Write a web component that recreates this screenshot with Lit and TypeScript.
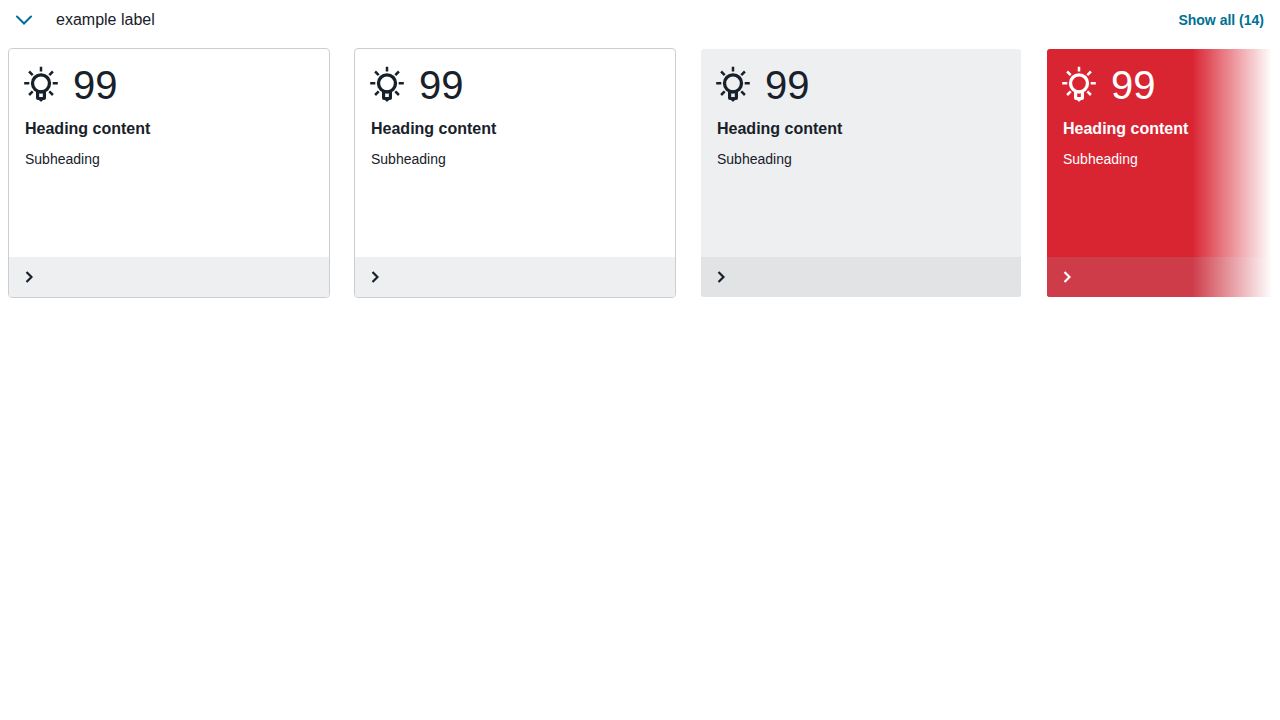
import { LitElement, html, css } from "lit";
import { customElement, property, state } from "lit/decorators.js";

type Tone = "plain" | "subtle" | "danger";

interface Insight {
  count: number;
  heading: string;
  subheading: string;
  tone: Tone;
}

@customElement("insight-card")
export class InsightCard extends LitElement {
  @property({ reflect: true }) tone: Tone = "plain";
  @property({ type: Number }) count = 0;
  @property() heading = "";
  @property() subheading = "";

  static styles = css`
    :host {
      display: flex;
      flex-direction: column;
      box-sizing: border-box;
      border: 1px solid #cbcdd2;
      border-radius: 4px;
      background: #ffffff;
      background-clip: padding-box;
      color: #18202a;
      --footer: #eeeff1;
      overflow: hidden;
    }
    :host([tone="subtle"]) {
      border-color: transparent;
      background-color: #eeeff1;
      --footer: #e2e3e5;
    }
    :host([tone="danger"]) {
      border-color: transparent;
      background-color: #d92432;
      color: #ffffff;
      --footer: #ce3c49;
    }
    .body {
      flex: 1;
      padding: 12px 16px;
    }
    .top {
      display: flex;
      align-items: center;
      gap: 16px;
    }
    .bulb {
      width: 32px;
      height: 32px;
      flex: none;
      overflow: visible;
    }
    .count {
      font-size: 40px;
      line-height: 48px;
    }
    h3 {
      margin: 8px 0 0;
      font-size: 16px;
      line-height: 24px;
      font-weight: 700;
    }
    p {
      margin: 8px 0 0;
      font-size: 14px;
      line-height: 20px;
    }
    .more {
      display: flex;
      align-items: center;
      width: 100%;
      height: 40px;
      padding: 0 16px;
      border: 0;
      background: var(--footer);
      color: inherit;
      cursor: pointer;
    }
    .more svg {
      width: 8px;
      height: 12px;
    }
  `;

  render() {
    return html`
      <div class="body">
        <div class="top">
          <svg class="bulb" viewBox="0 0 32 32" fill="none" stroke="currentColor" aria-hidden="true">
            <circle cx="16" cy="14.3" r="8.5" stroke-width="3.3" />
            <path
              stroke-width="2.5"
              d="M16-2.2V2.6M-.8 14.2H4.3M27.7 14.2H32.8M4.1 2.5L7.7 6.1M27.9 2.5L24.3 6.1M4.1 26L7.7 22.4M27.9 26L24.3 22.4"
            />
            <path
              fill="currentColor"
              stroke="none"
              fill-rule="evenodd"
              d="M11 21.5H21V29Q21 31 19 31H18L16.9 32.2Q16 33 15.1 32.2L14 31H13Q11 31 11 29ZM14.2 24.2V28H17.8V24.2Z"
            />
          </svg>
          <span class="count">${this.count}</span>
        </div>
        <h3>${this.heading}</h3>
        <p>${this.subheading}</p>
      </div>
      <button class="more" aria-label="Open ${this.heading}">
        <svg viewBox="0 0 8 12" fill="none" stroke="currentColor" stroke-width="2.2" aria-hidden="true">
          <path d="M1.5 1L6.5 6L1.5 11" />
        </svg>
      </button>
    `;
  }
}

@customElement("app-root")
export class AppRoot extends LitElement {
  @state() private open = true;

  private items: Insight[] = (["plain", "plain", "subtle", "danger"] as Tone[]).map((tone) => ({
    count: 99,
    heading: "Heading content",
    subheading: "Subheading",
    tone,
  }));

  static styles = css`
    :host {
      display: block;
      font-family: "Liberation Sans", Arial, sans-serif;
      color: #18202a;
    }
    header {
      display: flex;
      align-items: center;
      height: 40px;
      padding: 0 16px;
    }
    .toggle {
      display: flex;
      align-items: center;
      gap: 24px;
      padding: 0;
      border: 0;
      background: none;
      color: inherit;
      font: inherit;
      font-size: 16px;
      line-height: 24px;
      cursor: pointer;
    }
    .toggle svg {
      width: 16px;
      height: 16px;
      overflow: visible;
      color: #007095;
    }
    .all {
      margin-left: auto;
      color: #007095;
      font-size: 14px;
      line-height: 20px;
      font-weight: 700;
      text-decoration: none;
    }
    .strip {
      position: relative;
      margin: 8px 8px 0;
    }
    .track {
      display: flex;
      gap: 24px;
      overflow: hidden;
    }
    insight-card {
      flex: 0 0 322px;
      min-height: 250px;
    }
    .fade {
      position: absolute;
      top: 0;
      right: 0;
      bottom: 0;
      width: 80px;
      background: linear-gradient(to right, rgba(255, 255, 255, 0), #ffffff);
      pointer-events: none;
    }
  `;

  render() {
    return html`
      <header>
        <button class="toggle" aria-expanded=${this.open} @click=${() => (this.open = !this.open)}>
          <svg viewBox="0 0 16 16" fill="none" stroke="currentColor" stroke-width="2" stroke-linecap="round" aria-hidden="true">
            <path d="M1 4.5L8 11.5L15 4.5" />
          </svg>
          <span>example label</span>
        </button>
        <a class="all" href="#all">Show all (14)</a>
      </header>
      ${this.open
        ? html`<div class="strip">
            <div class="track">
              ${this.items.map(
                (i) => html`<insight-card
                  tone=${i.tone}
                  .count=${i.count}
                  .heading=${i.heading}
                  .subheading=${i.subheading}
                ></insight-card>`
              )}
            </div>
            <div class="fade"></div>
          </div>`
        : null}
    `;
  }
}
